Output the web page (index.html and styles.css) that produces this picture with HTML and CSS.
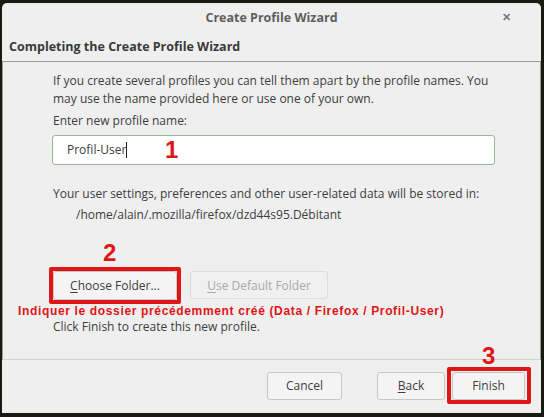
FILE: index.html
```
<!DOCTYPE html>
<html>
<head>
<meta charset="utf-8">
<link rel="stylesheet" href="styles.css">
</head>
<body>
<div class="window">
  <div class="titlebar">
    <span class="title">Create Profile Wizard</span>
    <span class="close">&#x2715;</span>
  </div>
  <div class="header">Completing the Create Profile Wizard</div>
  <div class="content">
    <p class="intro">If you create several profiles you can tell them apart by the profile names. You may use the name provided here or use one of your own.</p>
    <p class="label">Enter new profile name:</p>
    <div class="input"><span class="value">Profil-User</span><span class="caret"></span></div>
    <p class="info">Your user settings, preferences and other user-related data will be stored in:</p>
    <p class="path">/home/alain/.mozilla/firefox/dzd44s95.Débitant</p>
    <div class="folder-row">
      <button class="btn marked choose"><u>C</u>hoose Folder...</button>
      <button class="btn disabled default"><u>U</u>se Default Folder</button>
    </div>
    <p class="note">Indiquer le dossier précédemment créé (Data / Firefox / Profil-User)</p>
    <p class="finish-text">Click Finish to create this new profile.</p>
  </div>
  <div class="footer">
    <button class="btn cancel">Cancel</button>
    <button class="btn back"><u>B</u>ack</button>
    <button class="btn marked finish">Finish</button>
  </div>
  <span class="num n1">1</span>
  <span class="num n2">2</span>
  <span class="num n3">3</span>
</div>
</body>
</html>
```
FILE: styles.css
```
html, body {
  margin: 0;
  padding: 0;
}
body {
  width: 544px;
  height: 417px;
  background: #1b1a12;
  overflow: hidden;
  font-family: "Open Sans", "Noto Sans", sans-serif;
  font-size: 12px;
  color: #3d3d3d;
}
.window {
  position: relative;
  margin: 3px 3px 0 2px;
  height: 410px;
  background: #efefef;
  border-radius: 5px 5px 0 0;
  display: flex;
  flex-direction: column;
}
.titlebar {
  height: 28px;
  display: flex;
  align-items: center;
  justify-content: center;
  position: relative;
}
.title {
  font-weight: 700;
  font-size: 12.5px;
  color: #5e5e5e;
  padding-top: 1px;
}
.close {
  position: absolute;
  right: 30px;
  top: 6px;
  font-size: 11px;
  font-weight: 700;
  color: #7a7a7a;
}
.header {
  height: 30px;
  padding-left: 7px;
  display: flex;
  align-items: center;
  font-weight: 700;
  font-size: 12.5px;
  color: #3a3a3a;
}
.content {
  flex: 1;
  border-top: 1px solid #9a9a9a;
  border-left: 1px solid #9a9a9a;
  border-right: 1px solid #9a9a9a;
  border-bottom: 1px solid #d0d0d0;
  padding: 10px 46px 0 50px;
  line-height: 18px;
}
.content p {
  margin: 0;
}
.label {
  margin-top: 4px !important;
}
.input {
  margin-top: 5px;
  width: 443px;
  box-sizing: border-box;
  height: 30px;
  margin-left: -1px;
  background: #fff;
  border: 1px solid #9fb38f;
  border-radius: 3px;
  display: flex;
  align-items: center;
  padding-left: 14px;
}
.caret {
  display: inline-block;
  width: 1px;
  height: 16px;
  background: #222;
}
.info {
  margin-top: 20px !important;
}
.path {
  margin-top: 3px !important;
  padding-left: 23px;
}
.folder-row {
  margin-top: 47px;
  display: flex;
  gap: 13px;
}
.btn {
  font-family: "Open Sans", "Noto Sans", sans-serif;
  font-size: 12px;
  color: #3d3d3d;
  background: #f4f4f4;
  border: 1px solid #c6c6c6;
  border-radius: 3px;
  height: 28px;
  padding: 0;
  position: relative;
}
.btn u {
  text-decoration-thickness: 1px;
  text-underline-offset: 2px;
}
.marked::after {
  content: "";
  position: absolute;
  left: -5px;
  right: -5px;
  top: -5px;
  bottom: -5px;
  border: 4px solid #e01515;
  border-radius: 2px;
}
.choose {
  width: 124px;
  height: 29px;
}
.default {
  width: 138px;
  color: #a9a9a9;
  border-color: #dcdcdc;
  background: #f0f0f0;
}
.note {
  margin-left: -35px !important;
  margin-top: 3px !important;
  font-family: "Liberation Sans", Arial, sans-serif;
  font-weight: 700;
  font-size: 12px;
  letter-spacing: 0.65px;
  color: #e01515;
  line-height: 16px;
  white-space: nowrap;
}
.finish-text {
  margin-top: -1px !important;
}
.footer {
  height: 53px;
  display: flex;
  align-items: center;
  justify-content: flex-end;
  padding-right: 16px;
  padding-bottom: 2px;
  box-sizing: border-box;
}
.cancel {
  width: 75px;
  margin-right: 35px;
}
.back {
  width: 68px;
  margin-right: 7px;
}
.finish {
  width: 73px;
}
.finish::after {
  left: -6px;
  right: -7px;
  top: -6px;
  bottom: -5px;
}
.num {
  position: absolute;
  font-family: "Liberation Sans", Arial, sans-serif;
  font-weight: 700;
  font-size: 24px;
  color: #e01515;
  line-height: 1;
}
.n1 { left: 163px; top: 135px; }
.n2 { left: 101px; top: 238px; }
.n3 { left: 480px; top: 341px; }
```
